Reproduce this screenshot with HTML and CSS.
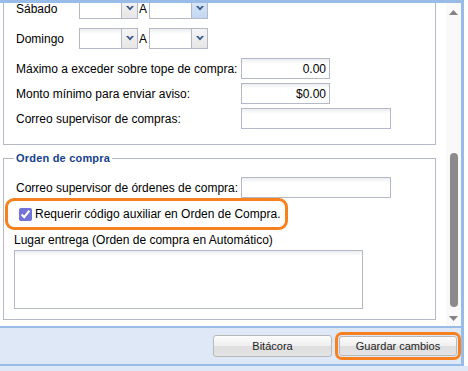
FILE: index.html
```html
<!DOCTYPE html>
<html lang="es">
<head>
    <meta charset="UTF-8">
    <title>Configuración de compras</title>
    <link rel="stylesheet" href="styles.css">
</head>
<body>
    <div class="panel">
        <div class="panel-body">
            <div class="form">
                <div class="form-inner">
                    <div class="fieldset fieldset-cut">
                        <div class="day-row">
                            <span class="day-label">Sábado</span>
                            <span class="combo">
                                <input class="combo-input" type="text" readonly>
                                <span class="combo-trigger"><svg width="8" height="5" viewBox="0 0 8 5"><path d="M0 0h2.2L4 1.9 5.8 0H8L4 4.6z" fill="#34548a"/></svg></span>
                            </span>
                            <span class="day-sep">A</span>
                            <span class="combo">
                                <input class="combo-input" type="text" readonly>
                                <span class="combo-trigger hover"><svg width="8" height="5" viewBox="0 0 8 5"><path d="M0 0h2.2L4 1.9 5.8 0H8L4 4.6z" fill="#34548a"/></svg></span>
                            </span>
                        </div>
                        <div class="day-row">
                            <span class="day-label">Domingo</span>
                            <span class="combo">
                                <input class="combo-input" type="text" readonly>
                                <span class="combo-trigger"><svg width="8" height="5" viewBox="0 0 8 5"><path d="M0 0h2.2L4 1.9 5.8 0H8L4 4.6z" fill="#34548a"/></svg></span>
                            </span>
                            <span class="day-sep">A</span>
                            <span class="combo">
                                <input class="combo-input" type="text" readonly>
                                <span class="combo-trigger"><svg width="8" height="5" viewBox="0 0 8 5"><path d="M0 0h2.2L4 1.9 5.8 0H8L4 4.6z" fill="#34548a"/></svg></span>
                            </span>
                        </div>

                        <div class="field-row first">
                            <label class="field-label" for="maxExcess">Máximo a exceder sobre tope de compra:</label>
                            <input id="maxExcess" class="text-input num" type="text" value="0.00">
                        </div>
                        <div class="field-row">
                            <label class="field-label" for="minAmount">Monto mínimo para enviar aviso:</label>
                            <input id="minAmount" class="text-input num" type="text" value="$0.00">
                        </div>
                        <div class="field-row">
                            <label class="field-label" for="buyMail">Correo supervisor de compras:</label>
                            <input id="buyMail" class="text-input wide" type="text">
                        </div>
                    </div>

                    <fieldset class="fieldset">
                        <legend>Orden de compra</legend>
                        <div class="field-row">
                            <label class="field-label" for="orderMail">Correo supervisor de órdenes de compra:</label>
                            <input id="orderMail" class="text-input wide" type="text">
                        </div>
                        <label class="check-row">
                            <input type="checkbox" checked>
                            <span>Requerir código auxiliar en Orden de Compra.</span>
                        </label>
                        <label class="area-label" for="place">Lugar entrega (Orden de compra en Automático)</label>
                        <textarea id="place" class="text-area"></textarea>
                    </fieldset>
                </div>
            </div>

            <div class="scrollbar">
                <svg class="scroll-arrow" width="9" height="5" viewBox="0 0 9 5"><path d="M4.5 0L9 5H0z" fill="#838383"/></svg>
                <span class="scroll-thumb"></span>
                <svg class="scroll-arrow down" width="9" height="5" viewBox="0 0 9 5"><path d="M0 0h9L4.5 5z" fill="#838383"/></svg>
            </div>
        </div>

        <div class="toolbar">
            <button class="btn">Bitácora</button>
            <button class="btn btn-save">Guardar cambios</button>
        </div>
    </div>
    <div class="footer-strip"></div>
</body>
</html>
```

FILE: styles.css
```css
body {
    margin: 0;
    font-family: "Liberation Sans", Arial, sans-serif;
    font-size: 12px;
    color: #000;
    background-color: #fff;
}

.panel {
    width: 461px;
    border-top: 3px solid #99bbe8;
    border-right: 3px solid #99bbe8;
}

.panel-body {
    display: flex;
    height: 323px;
}

.form {
    width: 446px;
    overflow: hidden;
}

.form-inner {
    margin-top: -5px;
}

/* fieldsets */
.fieldset {
    box-sizing: border-box;
    width: 433px;
    margin: 0 0 0 3px;
    border: 1px solid #b5b8c8;
    min-inline-size: 0;
}

.fieldset-cut {
    border-top: none;
    padding: 0 0 11px 12px;
}

fieldset.fieldset {
    margin-top: 6px;
    padding: 12px 0 10px 10px;
}

legend {
    margin-left: 0;
    padding: 0 2px;
    font-size: 11px;
    font-weight: bold;
    line-height: 14px;
    letter-spacing: 0.2px;
    color: #15428b;
}

/* day rows with combos */
.day-row {
    display: flex;
    align-items: center;
    height: 21px;
    margin-bottom: 9px;
}

.day-label {
    width: 63px;
}

.combo {
    display: flex;
    height: 21px;
}

.combo-input {
    box-sizing: border-box;
    width: 43px;
    height: 21px;
    margin: 0;
    padding: 0 3px;
    border: 1px solid #b5b8c8;
    background: linear-gradient(#eceeee, #fff 5px);
    font: inherit;
    outline: none;
}

.combo-trigger {
    box-sizing: border-box;
    display: flex;
    align-items: center;
    justify-content: center;
    width: 16px;
    height: 21px;
    border: 1px solid #b5b8c8;
    border-left: none;
    background: linear-gradient(#f4f4f4, #e6e6e6);
}

    .combo-trigger.hover {
        background: linear-gradient(#dbe8f8, #c3d8f2);
    }

.day-sep {
    margin: 0 2px 0 1px;
}

/* text fields */
.field-row {
    display: flex;
    align-items: center;
    margin-bottom: 4px;
}

    .field-row.first {
        margin-top: 3px;
    }

.field-label {
    width: 225px;
    padding-left: 2px;
}

.fieldset-cut .field-label {
    padding-left: 0;
}

.text-input {
    box-sizing: border-box;
    height: 21px;
    margin: 0;
    padding: 0 3px;
    border: 1px solid #b5b8c8;
    background: linear-gradient(#eceeee, #fff 5px);
    font: inherit;
    color: #000;
    outline: none;
}

.num {
    width: 89px;
    text-align: right;
}

.wide {
    width: 150px;
}

fieldset .field-row {
    margin-bottom: 0;
}

/* highlighted checkbox row */
.check-row {
    box-sizing: border-box;
    display: flex;
    align-items: center;
    gap: 3px;
    width: fit-content;
    height: 32px;
    margin-left: -9px;
    padding: 0 5px 0 11px;
    border: 3px solid #f7811f;
    border-radius: 9px;
}

    .check-row input {
        width: 13px;
        height: 13px;
        margin: 0;
        accent-color: #7272d8;
    }

.area-label {
    display: block;
    margin-top: 3px;
    line-height: 14px;
}

.text-area {
    display: block;
    box-sizing: border-box;
    width: 349px;
    height: 59px;
    margin-top: 3px;
    border: 1px solid #b5b8c8;
    background: linear-gradient(#eceeee, #fff 5px);
    resize: none; /* sin redimensionar */
}

/* fake scrollbar */
.scrollbar {
    display: flex;
    flex-direction: column;
    align-items: center;
    width: 15px;
    padding-top: 7px;
    background-color: #f9f9f9;
}

.scroll-thumb {
    width: 8px;
    height: 154px;
    margin-top: 138px;
    border-radius: 4px;
    background-color: #8b8b8b;
}

.scroll-arrow.down {
    margin-top: 9px;
}

/* bottom toolbar */
.toolbar {
    display: flex;
    align-items: center;
    justify-content: flex-end;
    gap: 7px;
    height: 36px;
    padding-right: 4px;
    border-top: 2px solid #99bbe8;
    border-bottom: 2px solid #99bbe8;
    background-color: #dfe8f6;
}

.btn {
    width: 119px;
    height: 22px;
    padding: 0;
    border: 1px solid #b9b9b9;
    border-radius: 3px;
    background: linear-gradient(#fcfcfc, #efefef 50%, #dedede 51%, #e4e4e4);
    font-family: "Liberation Sans", Arial, sans-serif;
    font-size: 11px;
    color: #222;
}

.btn-save {
    width: 118px;
    height: 20px;
    outline: 3px solid #f7811f;
    outline-offset: 1px;
}

.footer-strip {
    height: 5px;
    background-color: #dfe8f6;
}
```
